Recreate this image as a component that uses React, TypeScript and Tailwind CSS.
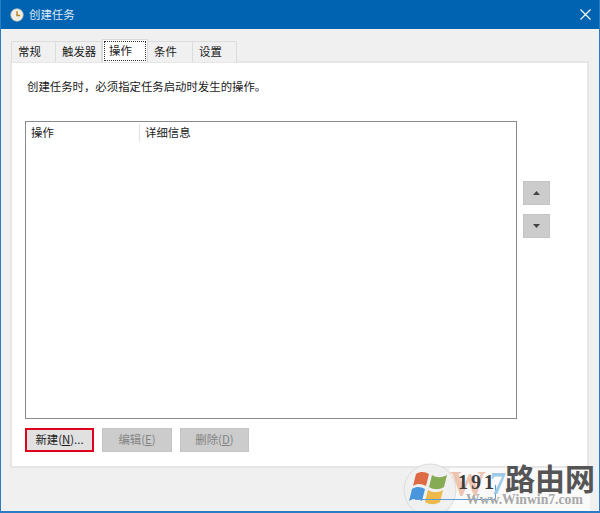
import React from 'react';

const cjk = "font-['Noto_Sans_CJK_SC','Liberation_Sans',sans-serif]";

const tabs = [
  { label: '常规', width: 'w-[45px]' },
  { label: '触发器', width: 'w-[46px]' },
  { label: '操作', width: 'w-[46px]', active: true },
  { label: '条件', width: 'w-[45px]' },
  { label: '设置', width: 'w-[44px]' },
];

const ClockIcon = () => (
  <svg width="14" height="14" viewBox="0 0 14 14">
    <circle cx="7" cy="7" r="6.2" fill="#f2efe6" stroke="#c9c4b4" strokeWidth="0.8" />
    <path d="M7 3.2V7.4H10.2" fill="none" stroke="#b5862a" strokeWidth="1.5" />
  </svg>
);

const WinLogo = () => (
  <svg width="54" height="54" viewBox="0 0 54 54">
    <circle cx="27" cy="27" r="26" fill="#f0f0f0" stroke="#dcdcdc" />
    <path d="M13 11c5-3 9-2 13 0l-3 12c-4-2-8-3-13 0z" fill="#dd6a45" />
    <path d="M29 12c5 3 9 3 15 0l-3 12c-5 3-10 3-15 0z" fill="#86ab55" />
    <path d="M9 26c5-3 9-2 13 0l-3 12c-4-2-8-3-13 0z" fill="#4a96dc" />
    <path d="M25 27c5 3 10 3 15 0l-3 12c-5 3-10 3-15 0z" fill="#ecb94a" />
  </svg>
);

const ArrowButton = ({ up }: { up?: boolean }) => (
  <div className="w-[27px] h-[24px] bg-[#cccccc] border border-[#c4c4c4] flex items-center justify-center">
    <svg width="7" height="4" viewBox="0 0 7 4">
      <path d={up ? 'M3.5 0L7 4H0z' : 'M0 0H7L3.5 4z'} fill="#444444" />
    </svg>
  </div>
);

const ActionButton = ({ label, mnemonic, width }: { label: string; mnemonic: string; width: string }) => (
  <div className={`${width} h-[24px] bg-[#cccccc] border border-[#c4c4c4] flex items-center justify-center text-[#838383]`}>
    {label}(<span className="underline">{mnemonic}</span>)
  </div>
);

export default function App() {
  return (
    <div className={`relative w-[600px] h-[513px] overflow-hidden flex flex-col bg-[#f0f0f0] border-x border-b-2 border-[#2a7cc4] text-[11.4px] text-[#1a1a1a] ${cjk}`}>
      {/* title bar */}
      <div className="-mx-px h-[29px] shrink-0 bg-[#0063b1] flex items-center text-white">
        <div className="ml-[10px] mr-[5px]">
          <ClockIcon />
        </div>
        <span className="text-[#dce9f5]">创建任务</span>
        <svg className="ml-auto mr-[9px]" width="11" height="11" viewBox="0 0 11 11">
          <path d="M0.5 0.5L10.5 10.5M10.5 0.5L0.5 10.5" stroke="#ffffff" strokeWidth="1.1" />
        </svg>
      </div>

      <div className="flex flex-col flex-1 pl-[9px] pr-[10px] pt-[11px] pb-[43px]">
        {/* tabs */}
        <div className="flex h-[22px] items-end pl-px relative z-10 -mb-px">
          {tabs.map((tab) =>
            tab.active ? (
              <div key={tab.label} className={`${tab.width} h-[23px] bg-white border border-b-0 border-[#d9d9d9] p-[1px]`}>
                <div className="h-[20px] border border-dotted border-[#333333] flex items-center pl-[4px]">
                  {tab.label}
                </div>
              </div>
            ) : (
              <div key={tab.label} className={`${tab.width} h-[21px] bg-[#f0f0f0] border border-b-0 border-l-0 first:border-l border-[#dcdcdc] flex items-center pl-[6px]`}>
                {tab.label}
              </div>
            ),
          )}
        </div>

        {/* tab panel */}
        <div className="flex-1 bg-white border-2 border-[#e6e6e6] pl-[13px] pr-[36px] flex flex-col">
          <p className="mt-[14px] h-[18px] leading-[18px] pl-[2px]">创建任务时，必须指定任务启动时发生的操作。</p>
          <div className="flex mt-[26px]">
            <div className="w-[492px] h-[298px] border border-[#8a8a8a]">
              <div className="flex h-[20px] mt-[1px] items-center">
                <span className="w-[114px] pl-[5px] border-r border-[#e2e2e2]">操作</span>
                <span className="pl-[5px]">详细信息</span>
              </div>
            </div>
            <div className="ml-[6px] mt-[60px] flex flex-col gap-[9px]">
              <ArrowButton up />
              <ArrowButton />
            </div>
          </div>
          <div className="flex gap-[8px] mt-[9px]">
            <div className="w-[69px] h-[24px] bg-[#e1e1e1] border-2 border-[#e00020] flex items-center justify-center">
              新建(<span className="underline">N</span>)...
            </div>
            <ActionButton label="编辑" mnemonic="E" width="w-[70px]" />
            <ActionButton label="删除" mnemonic="D" width="w-[69px]" />
          </div>
        </div>
      </div>

      {/* watermark */}
      <div className="absolute left-[449px] top-[468px] w-[140px] h-[45px] bg-[#fafafa]" />
      <div className="absolute left-[402px] top-[463px]">
        <WinLogo />
      </div>
      <div className="absolute left-[414px] top-[485px] w-[81px] h-[15px] border-r border-b border-[#5c9ad8]" />
      <span className="absolute left-[449px] top-[466px] text-[36px] leading-none font-bold text-[#edc4b2] font-['Liberation_Serif',serif]">W</span>
      <span className="absolute left-[489px] top-[467px] text-[32px] leading-none font-bold text-[#9ccbe8] font-['Liberation_Serif',serif]">7</span>
      <span className="absolute left-[457px] top-[472px] text-[20px] leading-none font-bold tracking-[3px] text-[#3d3d3d] font-['Liberation_Serif',serif]">191</span>
      <span className="absolute left-[504px] top-[462px] text-[30px] leading-none font-bold text-[#555555]">路由网</span>
      <span className="absolute left-[465px] top-[493px] text-[13.7px] leading-none font-bold text-[#a8a8a8] font-['Liberation_Serif',serif]">Www.Winwin7.com</span>
    </div>
  );
}
